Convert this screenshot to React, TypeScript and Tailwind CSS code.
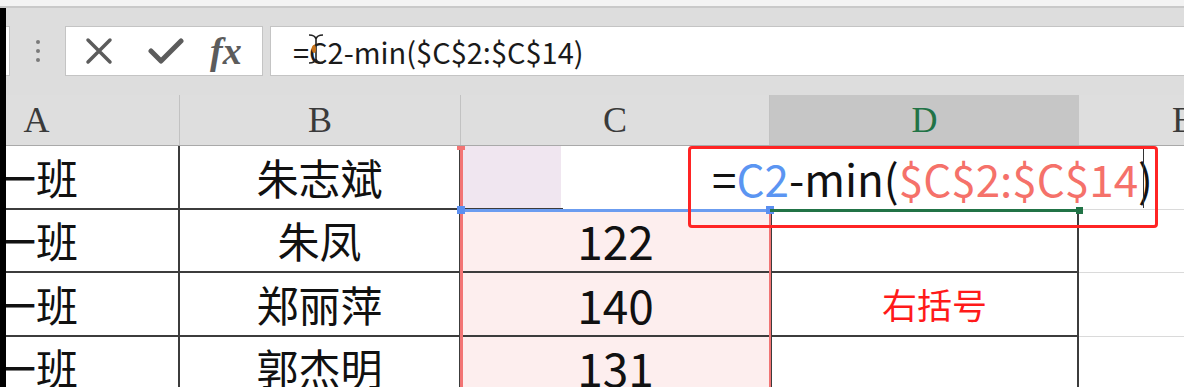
import React from 'react';

const cjk = { fontFamily: '"Noto Sans CJK SC", "Noto Sans", sans-serif' };
const serif = { fontFamily: '"Liberation Serif", "Noto Sans CJK SC", serif' };

const rows = [
  { a: '一班', b: '朱志斌', c: '', d: '' },
  { a: '一班', b: '朱凤', c: '122', d: '' },
  { a: '一班', b: '郑丽萍', c: '140', d: '右括号' },
  { a: '一班', b: '郭杰明', c: '131', d: '' },
];

const FormulaBar: React.FC = () => (
  <div className="h-[87px] bg-[#dddddd] flex items-start pt-[18px]">
    <div className="w-[4px] h-[50px] bg-white border-y border-r border-[#c4c4c4]" />
    <div className="w-[55px] h-[50px] flex items-center justify-center">
      <div className="flex flex-col gap-[5px]">
        <span className="w-[4px] h-[4px] rounded-full bg-[#7a7a7a]" />
        <span className="w-[4px] h-[4px] rounded-full bg-[#7a7a7a]" />
        <span className="w-[4px] h-[4px] rounded-full bg-[#7a7a7a]" />
      </div>
    </div>
    <div className="w-[198px] h-[50px] bg-white border border-[#c4c4c4] flex items-center">
      <svg className="ml-[18px] w-[30px] h-[30px]" viewBox="0 0 30 30">
        <path d="M4 4 L26 26 M26 4 L4 26" stroke="#5c5c5c" strokeWidth="3.5" strokeLinecap="round" />
      </svg>
      <svg className="ml-[34px] w-[36px] h-[28px]" viewBox="0 0 36 28">
        <path d="M3 14 L13 24 L33 4" fill="none" stroke="#5c5c5c" strokeWidth="5" strokeLinecap="round" strokeLinejoin="round" />
      </svg>
      <span className="ml-[26px] text-[38px] italic font-bold leading-none text-[#5c5c5c]" style={serif}>fx</span>
    </div>
    <div className="ml-[7px] flex-1 h-[50px] bg-white border-y border-l border-[#c4c4c4] flex items-center pl-[22px]">
      <span className="text-[29px] leading-none text-[#1a1a1a]" style={cjk}>=C2-min($C$2:$C$14)</span>
    </div>
  </div>
);

const HeaderRow: React.FC = () => (
  <div className="flex h-[51px] bg-[#dedede] border-b border-[#a9a9a9] text-[36px] text-[#3a3a3a]" style={serif}>
    <div className="w-[286px] shrink-0 flex items-center justify-center border-r border-[#c2c2c2]">A</div>
    <div className="w-[281px] shrink-0 flex items-center justify-center border-r border-[#c2c2c2]">B</div>
    <div className="w-[309px] shrink-0 flex items-center justify-center border-r border-[#c2c2c2]">C</div>
    <div className="w-[309px] shrink-0 flex items-center justify-center bg-[#c6c6c6] text-[#217346]">D</div>
    <div className="w-[120px] shrink-0 flex items-center pl-[93px]">E</div>
  </div>
);

const App: React.FC = () => {
  return (
    <div className="relative w-[1184px] h-[387px] overflow-hidden bg-white">
      <div className="h-[8px] bg-[#f3f3f3] border-b-2 border-[#c9c9c9]" />
      <div className="flex">
        <div className="w-[6px] h-[379px] bg-black shrink-0" />
        <div className="flex-1 overflow-hidden">
          <FormulaBar />
          <div className="ml-[-112px]">
            <HeaderRow />
            {rows.map((r, i) => (
              <div key={i} className="flex h-[63.5px] text-[#111]" style={cjk}>
                <div className="w-[286px] shrink-0 flex items-center justify-center text-[42px] leading-none border-r-2 border-b-2 border-[#3c3c3c]">{r.a}</div>
                <div className="w-[281px] shrink-0 flex items-center justify-center text-[42px] leading-none border-r-2 border-b-2 border-[#3c3c3c]">{r.b}</div>
                <div className={`w-[309px] shrink-0 flex items-center justify-center text-[46px] leading-none border-b-2 border-[#3c3c3c] ${i === 0 ? 'bg-white' : 'bg-[#fdeeee]'}`}>
                  {i === 0 ? <div className="self-stretch w-[99px] mr-auto ml-[1px] bg-[#f0e6f0]" /> : r.c}
                </div>
                <div className="w-[309px] shrink-0 flex items-center justify-center pl-[20px] text-[35px] leading-none text-[#ff1a1a] border-l-2 border-r-2 border-b-2 border-[#3c3c3c]">{r.d}</div>
                <div className="w-[120px] shrink-0 border-b border-[#dadada]" />
              </div>
            ))}
          </div>
        </div>
      </div>

      {/* range highlights */}
      <div className="absolute left-[460px] top-[147px] w-[3px] h-[240px] bg-[#f27474]" />
      <div className="absolute left-[457px] top-[146px] w-[8px] h-[4px] bg-[#f27474]" />
      <div className="absolute left-[769px] top-[210px] w-[2px] h-[177px] bg-[#f27474]" />

      {/* cell editor */}
      <div className="absolute left-[563px] top-[147px] w-[597px] h-[62px] bg-white" />
      <div className="absolute left-[461px] top-[209px] w-[309px] h-[3px] bg-[#6b9cf0]" />
      <div className="absolute left-[457px] top-[206px] w-[8px] h-[8px] bg-[#5b8ff0]" />
      <div className="absolute left-[766px] top-[206px] w-[8px] h-[8px] bg-[#5b8ff0]" />
      <div className="absolute left-[770px] top-[209px] w-[309px] h-[3px] bg-[#217346]" />
      <div className="absolute left-[1076px] top-[207px] w-[7px] h-[7px] bg-[#217346]" />
      <div className="absolute left-[712px] top-[147px] h-[62px] flex items-center text-[44px] leading-none" style={cjk}>
        <span className="text-[#111]">=</span>
        <span className="text-[#5b95f2]">C2</span>
        <span className="text-[#111]">-min(</span>
        <span className="text-[#f5716a]">$C$2:$C$14</span>
        <span className="text-[#111]">)</span>
      </div>
      <div className="absolute left-[1143px] top-[148px] w-[1px] h-[60px] bg-[#333]" />

      {/* annotation box */}
      <div className="absolute left-[688px] top-[146px] w-[470px] h-[82px] border-[3px] border-[#ff2424] rounded-[4px]" />

      {/* I-beam cursor */}
      <svg className="absolute left-[306px] top-[33px] w-[20px] h-[32px]" viewBox="0 0 20 32">
        <path d="M3 2 Q9 2 10 6 Q11 2 17 2 M10 6 L10 26 M3 30 Q9 30 10 26 Q11 30 17 30" fill="none" stroke="#222" strokeWidth="1.6" />
        <ellipse cx="8" cy="16" rx="2" ry="4" fill="#c8741c" />
      </svg>
    </div>
  );
};

export default App;
